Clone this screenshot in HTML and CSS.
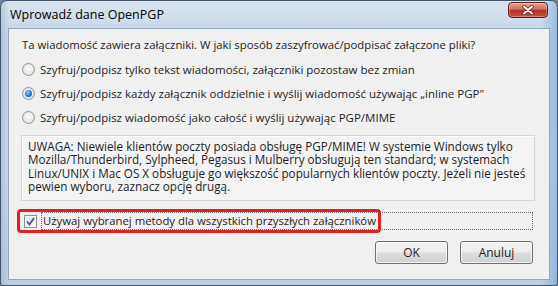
FILE: index.html
```html
<!doctype html>
<html lang="pl">
  <head>
    <meta charset="UTF-8" />
    <title>Wprowadź dane OpenPGP</title>
    <link rel="stylesheet" href="styles.css">
  </head>
  <body>
    <div class="window">
      <div class="titlebar">
        <span class="caption">Wprowadź dane OpenPGP</span>
        <div class="close">
          <svg width="14" height="10" viewBox="0 0 14 10">
            <path d="M3 1.5 L11 8.5 M11 1.5 L3 8.5" stroke="#6b2418" stroke-width="3.6" stroke-linecap="round" />
            <path d="M3 1.5 L11 8.5 M11 1.5 L3 8.5" stroke="#fff" stroke-width="2" stroke-linecap="round" />
          </svg>
        </div>
      </div>
      <div class="client">
        <p class="question">Ta wiadomość zawiera załączniki. W jaki sposób zaszyfrować/podpisać załączone pliki?</p>
        <div class="options">
          <div class="option">
            <span class="radio"></span>
            <span class="label">Szyfruj/podpisz tylko tekst wiadomości, załączniki pozostaw bez zmian</span>
          </div>
          <div class="option">
            <span class="radio checked"></span>
            <span class="label">Szyfruj/podpisz każdy załącznik oddzielnie i wyślij wiadomość używając „inline PGP"</span>
          </div>
          <div class="option">
            <span class="radio"></span>
            <span class="label">Szyfruj/podpisz wiadomość jako całość i wyślij używając PGP/MIME</span>
          </div>
        </div>
        <div class="note">
          UWAGA: Niewiele klientów poczty posiada obsługę PGP/MIME! W systemie Windows tylko<br>
          Mozilla/Thunderbird, Sylpheed, Pegasus i Mulberry obsługują ten standard; w systemach<br>
          Linux/UNIX i Mac OS X obsługuje go większość popularnych klientów poczty. Jeżeli nie jesteś<br>
          pewien wyboru, zaznacz opcję drugą.
        </div>
        <div class="remember">
          <span class="checkbox">
            <svg width="9" height="9" viewBox="0 0 9 9">
              <path d="M1 4.5 L3.5 7.5 L8 1" fill="none" stroke="#3c5a98" stroke-width="1.8" />
            </svg>
          </span>
          <span class="focus">Używaj wybranej metody dla wszystkich przyszłych załączników</span>
          <span class="highlight"></span>
        </div>
        <div class="buttons">
          <div class="button">OK</div>
          <div class="button">Anuluj</div>
        </div>
      </div>
    </div>
  </body>
</html>
```

FILE: styles.css
```css
* {
  margin: 0;
  padding: 0;
  box-sizing: border-box;
}
body {
  width: 558px;
  height: 286px;
  overflow: hidden;
  font-family: "Open Sans", "Noto Sans", sans-serif;
  font-size: 11.5px;
  color: #1e1e1e;
  background: #6d8198;
}
.window {
  display: flex;
  flex-direction: column;
  height: 286px;
  padding: 0 7px 5px 7px;
  border: 1px solid #44566b;
  border-radius: 7px 7px 3px 3px;
  background:
    linear-gradient(90deg, rgba(150, 175, 205, 0.5) 0, rgba(255, 255, 255, 0) 8px, rgba(255, 255, 255, 0) 540px, rgba(120, 165, 215, 0.6) 100%),
    linear-gradient(180deg, #d9e4ef 0%, #c6d6e8 12%, #cbdaea 60%, #bccfe4 100%);
}
.titlebar {
  display: flex;
  justify-content: space-between;
  align-items: flex-start;
  height: 27px;
}
.caption {
  padding: 5px 0 0 2px;
  font-size: 12.5px;
  color: #000;
}
.close {
  display: flex;
  align-items: center;
  justify-content: center;
  width: 40px;
  height: 16px;
  margin: 1px 2px 0 0;
  border: 1px solid #5c2119;
  border-radius: 4px;
  background: linear-gradient(180deg, #e6a397 0%, #d2705f 45%, #b5331f 50%, #c54e38 100%);
  box-shadow: inset 0 0 0 1px rgba(255, 255, 255, 0.3);
}
.client {
  display: flex;
  flex-direction: column;
  flex: 1;
  padding: 8px 16px 0 13px;
  border: 1px solid #95a6ba;
  background: #f0f0f0;
}
.question {
  font-size: 11.35px;
  line-height: 16px;
}
.options {
  display: flex;
  flex-direction: column;
  margin-top: 4px;
}
.option {
  display: flex;
  align-items: center;
  height: 24px;
}
.radio {
  position: relative;
  width: 13px;
  height: 13px;
  margin-right: 5px;
  border: 1px solid #959595;
  border-radius: 50%;
  background: radial-gradient(circle at 50% 45%, #ffffff 0%, #e9e9e9 55%, #cfcfcf 100%);
}
.radio.checked::after {
  content: "";
  position: absolute;
  left: 2px;
  top: 2px;
  width: 7px;
  height: 7px;
  border-radius: 50%;
  background: radial-gradient(circle at 40% 35%, #8fd0ff 0%, #2c7bd0 50%, #173f86 100%);
}
.note {
  height: 66px;
  margin: 6px -2px 0 -1px;
  padding: 4px 6px 0;
  font-size: 11.7px;
  line-height: 13.3px;
  border: 1px solid #d5d5d5;
  background: #f3f3f3;
  box-shadow: inset 1px 1px 0 #ffffff;
}
.remember {
  position: relative;
  display: flex;
  align-items: center;
  height: 24px;
  margin-top: 8px;
  padding-left: 2px;
}
.checkbox {
  display: flex;
  align-items: center;
  justify-content: center;
  width: 13px;
  height: 13px;
  margin-right: 4px;
  border: 1px solid #8f8f8f;
  background: linear-gradient(180deg, #e4e4e4, #fafafa);
  box-shadow: inset 0 0 0 1px #f6f6f6;
}
.focus {
  flex: 1;
  height: 18px;
  font-size: 11.35px;
  line-height: 16px;
  padding-left: 1px;
  border: 1px dotted #6a6a6a;
}
.highlight {
  position: absolute;
  left: -5px;
  top: 0;
  width: 364px;
  height: 24px;
  border: 3px solid #e3211c;
  border-radius: 4px;
}
.buttons {
  display: flex;
  justify-content: flex-end;
  gap: 12px;
  margin-top: 8px;
}
.button {
  display: flex;
  align-items: center;
  justify-content: center;
  width: 73px;
  height: 23px;
  font-size: 12px;
  border: 1px solid #707070;
  border-radius: 3px;
  background: linear-gradient(180deg, #f4f4f4 0%, #ececec 48%, #dddddd 52%, #d0d0d0 100%);
  box-shadow: inset 0 0 0 1px rgba(255, 255, 255, 0.7);
}
```
